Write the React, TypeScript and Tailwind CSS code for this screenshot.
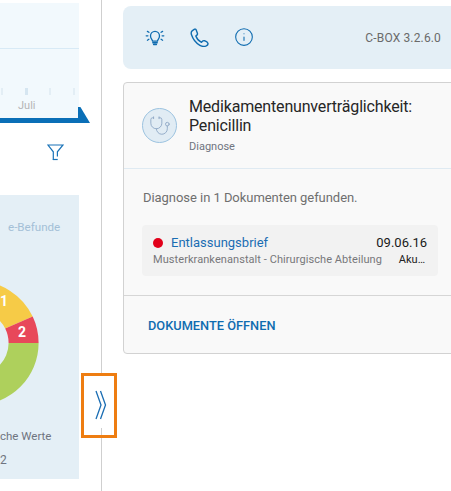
import { Info, Stethoscope } from 'lucide-react'

function BulbIcon() {
  return (
    <svg width="20" height="20" viewBox="0 0 20 20" fill="none" stroke="#0f6cb0" strokeWidth="1.3" strokeLinecap="round">
      <path d="M7.6 14.2c0-1.6-2.1-2.6-2.1-5.3a4.5 4.5 0 0 1 9 0c0 2.7-2.1 3.7-2.1 5.3z" />
      <path d="M7.8 15.8h4.4M8.6 17.4h2.8" strokeWidth="1.5" />
      <path d="M1.2 8.8h1.7M17.1 8.8h1.7M2.4 4.4l1.5.9M17.6 4.4l-1.5.9M2.4 13.2l1.5-.9M17.6 13.2l-1.5-.9" />
    </svg>
  )
}

function PhoneIcon() {
  return (
    <svg width="19" height="19" viewBox="0 0 19 19" fill="none" stroke="#0f6cb0" strokeWidth="1.4" strokeLinecap="round" strokeLinejoin="round">
      <path d="M4.6 1.2 2.4 2.6C1 3.6.9 5 1.5 6.8c1.4 4.2 4.6 8.4 8.4 10.6 2 1.1 4.4 1.4 6.4.5 1.4-.7 1.9-1.6 1.6-2.6-.4-1.3-1.8-2.2-3.3-2.6-1-.2-1.7 0-2.2.6l-.9 1c-2.3-1-4.6-3.6-5.7-6.3l1.1-.9c.6-.5.7-1.1.5-1.8L6.2 2c-.3-.8-1-1.1-1.6-.8z" />
    </svg>
  )
}

function FilterIcon() {
  return (
    <svg width="17" height="17" viewBox="0 0 17 17" fill="none" stroke="#1a73b8" strokeWidth="1.2">
      <path d="M6.3 15.5V7.8L1 1h15l-5.6 6.8v4.6" />
      <path d="M5.7 15.5h5" />
    </svg>
  )
}

function Donut() {
  return (
    <svg className="absolute left-0 top-[78px]" width="79" height="140" viewBox="0 0 79 140">
      <path d="M32.7 43.6A62 62 0 0 0 -23.4 8V38A32 32 0 0 1 5.2 55.6z" fill="#f6cb47" />
      <path d="M38.6 70A62 62 0 0 1 -23.4 132V102A32 32 0 0 0 8.6 70z" fill="#aed05c" />
      <path d="M38.6 70A62 62 0 0 0 32.7 43.6L5.2 55.6A32 32 0 0 1 8.6 70z" fill="#e8485a" />
    </svg>
  )
}

export default function App() {
  return (
    <div className="relative flex h-[491px] w-[451px] overflow-hidden bg-white font-['Roboto',sans-serif]">

      {/* left pane */}
      <div className="h-full w-[102px] shrink-0 border-r border-[#cfcfcf] pt-[3px]">
        <div className="relative h-[120px] w-[79px] border-b-[5px] border-[#0a6fb7] bg-[#f2f9fd] pt-[45px]">
          <div className="h-px bg-[#d8eaf6]" />
          <div className="mt-[39px] flex justify-between pl-[1px] pr-[4px]">
            <span className="h-[7px] w-[2px] bg-[#e3eef5]" />
            <span className="h-[7px] w-[3px] bg-[#d6e6f1]" />
            <span className="h-[7px] w-[2px] bg-[#e3eef5]" />
            <span className="h-[7px] w-[2px] bg-[#e3eef5]" />
          </div>
          <p className="mt-[4px] pl-[18px] text-[11px] leading-[13px] text-[#b5b5b5]">Juli</p>
          <span className="absolute bottom-[-5px] left-[78px] h-[16px] w-[12px] bg-[#0a6fb7] [clip-path:polygon(0_0,20%_0,100%_100%,0_100%)]" />
        </div>

        <div className="flex h-[72px] justify-end pr-[37px] pt-[21px]">
          <FilterIcon />
        </div>

        <div className="relative h-[284px] w-[79px] overflow-hidden bg-[#e4eff6]">
          <p className="absolute left-[8px] top-[25px] text-[11.6px] leading-[14px] text-[#a3bfd6]">e-Befunde</p>
          <Donut />
          <span className="absolute left-0 top-[98px] text-[14px] font-bold leading-4 text-white">1</span>
          <span className="absolute left-[18px] top-[129px] text-[14px] font-bold leading-4 text-white">2</span>
          <p className="absolute left-0 top-[234px] whitespace-nowrap text-[11.5px] leading-[14px] text-[#6f7480]">che Werte</p>
          <p className="absolute left-0 top-[258px] text-[12px] leading-[14px] text-[#6f7480]">2</p>
        </div>
      </div>

      {/* right pane */}
      <div className="w-[349px] shrink-0 pl-[21px] pt-[6px]">
        <div className="flex h-[63px] items-center justify-between rounded-l-lg bg-[#e4eff6] pl-[22px] pr-[10px]">
          <div className="flex items-center gap-[25px] pb-[1px]">
            <BulbIcon />
            <PhoneIcon />
            <Info size={20} strokeWidth={1.3} color="#0f6cb0" />
          </div>
          <span className="text-[12px] tracking-[0.15px] text-[#6a6a6a]">C-BOX 3.2.6.0</span>
        </div>

        <div className="-mr-4 mt-[13px] h-[272px] rounded-[4px] border border-[#d2d2d2] bg-[#f9f9f9]">
          <div className="flex h-[86px] gap-[12px] border-b border-[#dfeaf2] pl-[18px] pt-[14px]">
            <div className="mt-[11px] flex h-[35px] w-[35px] items-center justify-center rounded-full border border-[#9cc3e0] bg-[#e1ecf4]">
              <Stethoscope size={22} strokeWidth={1} color="#8fa9c6" />
            </div>
            <div>
              <p className="text-[16px] leading-[19px] tracking-[-0.17px] text-[#262626]">Medikamentenunverträglichkeit:<br />Penicillin</p>
              <p className="mt-[5px] text-[11px] leading-[14px] text-[#6f7480]">Diagnose</p>
            </div>
          </div>

          <div className="h-[127px] border-b border-[#d6d6d6] pl-[19px] pt-[21px]">
            <p className="text-[13px] leading-[16px] tracking-[-0.05px] text-[#6f6f6f]">Diagnose in 1 Dokumenten gefunden.</p>
            <div className="-ml-px mt-[19px] h-[51px] w-[296px] rounded-[4px] bg-[#f2f2f2] px-[11px] pt-[9px]">
              <div className="flex items-center justify-between">
                <div className="flex items-center gap-[8px]">
                  <span className="h-[10px] w-[10px] rounded-full bg-[#e2001a]" />
                  <span className="text-[13px] leading-[18px] text-[#1a6db3]">Entlassungsbrief</span>
                </div>
                <span className="text-[13px] leading-[18px] text-[#1a1a1a]">09.06.16</span>
              </div>
              <div className="flex items-center justify-between pr-[2px]">
                <span className="whitespace-nowrap text-[11px] leading-[15px] tracking-[0.07px] text-[#77777a]">Musterkrankenanstalt - Chirurgische Abteilung</span>
                <span className="text-[11px] leading-[15px] text-[#222]">Aku…</span>
              </div>
            </div>
          </div>

          <div className="pl-[24px] pt-[17px]">
            <span className="text-[12.8px] font-medium leading-[14px] text-[#0f6cb0]">DOKUMENTE ÖFFNEN</span>
          </div>
        </div>
      </div>

      {/* collapse toggle, sits on the divider */}
      <button className="absolute left-[81px] top-[373px] flex h-[65px] w-[36px] items-start justify-center border-[3px] border-[#ee7d11] bg-transparent pl-[4px] pt-[14px]">
        <span className="absolute inset-x-0 top-0 h-[52px] bg-white" />
        <svg className="relative" width="12" height="30" viewBox="0 0 12 30" fill="none" stroke="#1a6db3" strokeWidth="1.3">
          <path d="M1 1l5 14-5 14M5.5 1l5 14-5 14" />
        </svg>
      </button>
    </div>
  )
}
